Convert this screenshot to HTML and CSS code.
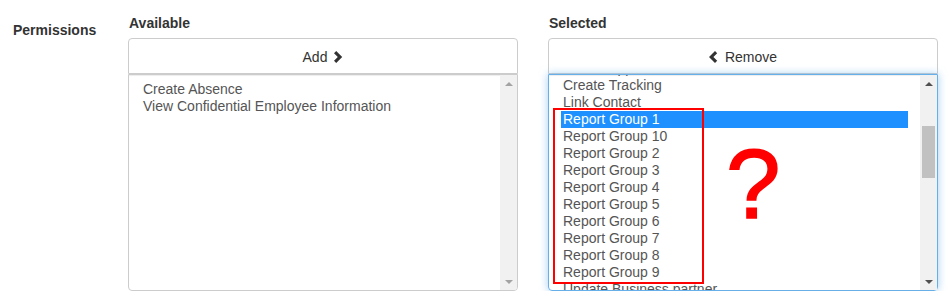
FILE: index.html
```html
<!DOCTYPE html>
<html lang="en">
<head>
  <meta charset="UTF-8">
  <title>Permissions</title>
  <link rel="stylesheet" href="styles.css">
</head>
<body>
  <div class="form-group">
    <label class="control-label">Permissions</label>

    <div class="picker">
      <div class="picker-col">
        <div class="col-title">Available</div>
        <button class="move-btn">Add
          <svg class="chevron" width="9" height="12" viewBox="0 0 9 12"><polygon points="0,2.2 2.2,0 8.2,6 2.2,12 0,9.8 3.8,6" /></svg>
        </button>
        <div class="listbox">
          <div class="options">
            <div class="option">Create Absence</div>
            <div class="option">View Confidential Employee Information</div>
          </div>
          <div class="scrollbar">
            <div class="sb-btn"><span class="arrow-up light"></span></div>
            <div class="sb-track"></div>
            <div class="sb-btn"><span class="arrow-down light"></span></div>
          </div>
        </div>
      </div>

      <div class="picker-col">
        <div class="col-title">Selected</div>
        <button class="move-btn">
          <svg class="chevron" width="9" height="12" viewBox="0 0 9 12"><polygon points="8.2,2.2 6,0 0,6 6,12 8.2,9.8 4.4,6" /></svg>
          Remove</button>
        <div class="listbox focused">
          <div class="options">
            <div class="scrolled">
              <div class="option">Create Appointment</div>
              <div class="option">Create Tracking</div>
              <div class="option">Link Contact</div>
              <div class="option selected">Report Group 1</div>
              <div class="option">Report Group 10</div>
              <div class="option">Report Group 2</div>
              <div class="option">Report Group 3</div>
              <div class="option">Report Group 4</div>
              <div class="option">Report Group 5</div>
              <div class="option">Report Group 6</div>
              <div class="option">Report Group 7</div>
              <div class="option">Report Group 8</div>
              <div class="option">Report Group 9</div>
              <div class="option">Update Business partner</div>
              <div class="option">View Contact</div>
            </div>
          </div>
          <div class="scrollbar">
            <div class="sb-btn"><span class="arrow-up"></span></div>
            <div class="sb-track"><div class="sb-thumb"></div></div>
            <div class="sb-btn"><span class="arrow-down"></span></div>
          </div>

          <!-- annotation drawn over the list -->
          <div class="mark-box"></div>
          <span class="mark-question">?</span>
        </div>
      </div>
    </div>
  </div>
</body>
</html>
```

FILE: styles.css
```css
body { margin: 0; font-family: "Liberation Sans", Arial, sans-serif; font-size: 14px; color: #333; background: #fff; }

.form-group { display: flex; padding-top: 13px; }
.control-label { width: 115px; padding: 7px 0 0 13px; font-weight: bold; line-height: 20px; }

.picker { display: flex; gap: 30px; }
.picker-col { width: 390px; display: flex; flex-direction: column; }
.col-title { font-weight: bold; line-height: 20px; margin-bottom: 5px; padding-left: 1px; }

.move-btn { height: 36px; padding: 2px 12px 0; font: inherit; color: #333; background: #fff; border: 1px solid #ccc; border-radius: 4px 4px 0 0; display: flex; align-items: center; justify-content: center; gap: 7px; }
.move-btn .chevron { fill: #333; }

.listbox { position: relative; height: 217px; box-sizing: border-box; display: flex; border: 1px solid #ccc; border-radius: 0 0 4px 4px; box-shadow: inset 0 1px 1px rgba(0,0,0,.075); overflow: hidden; color: #555; }
.listbox.focused { border-color: #66afe9; box-shadow: inset 0 1px 1px rgba(0,0,0,.075), 0 0 8px rgba(102,175,233,.6); overflow: visible; }
.options { flex: 1; padding: 6px 12px; overflow: hidden; }
.scrolled { margin-top: -21px; }
.option { line-height: 17px; height: 17px; padding: 0 2px; white-space: nowrap; }
.option.selected { background: #1e90ff; color: #fff; }

.scrollbar { width: 17px; background: #f1f1f1; display: flex; flex-direction: column; }
.sb-btn { height: 17px; display: flex; align-items: center; justify-content: center; }
.sb-track { flex: 1; padding: 0 2px; }
.sb-thumb { margin-top: 34px; height: 52px; background: #c1c1c1; }
.arrow-up, .arrow-down { width: 0; height: 0; border-left: 4px solid transparent; border-right: 4px solid transparent; }
.arrow-up { border-bottom: 4px solid #505050; }
.arrow-down { border-top: 4px solid #505050; }
.arrow-up.light { border-bottom-color: #a3a3a3; }
.arrow-down.light { border-top-color: #a3a3a3; }

.mark-box { position: absolute; left: 4px; top: 33px; width: 151px; height: 176px; box-sizing: border-box; border: 2px solid #f00; }
.mark-question { position: absolute; left: 177px; top: 59px; font-size: 98px; line-height: 100px; color: #f00; -webkit-text-stroke: 1.5px #f00; }
```
